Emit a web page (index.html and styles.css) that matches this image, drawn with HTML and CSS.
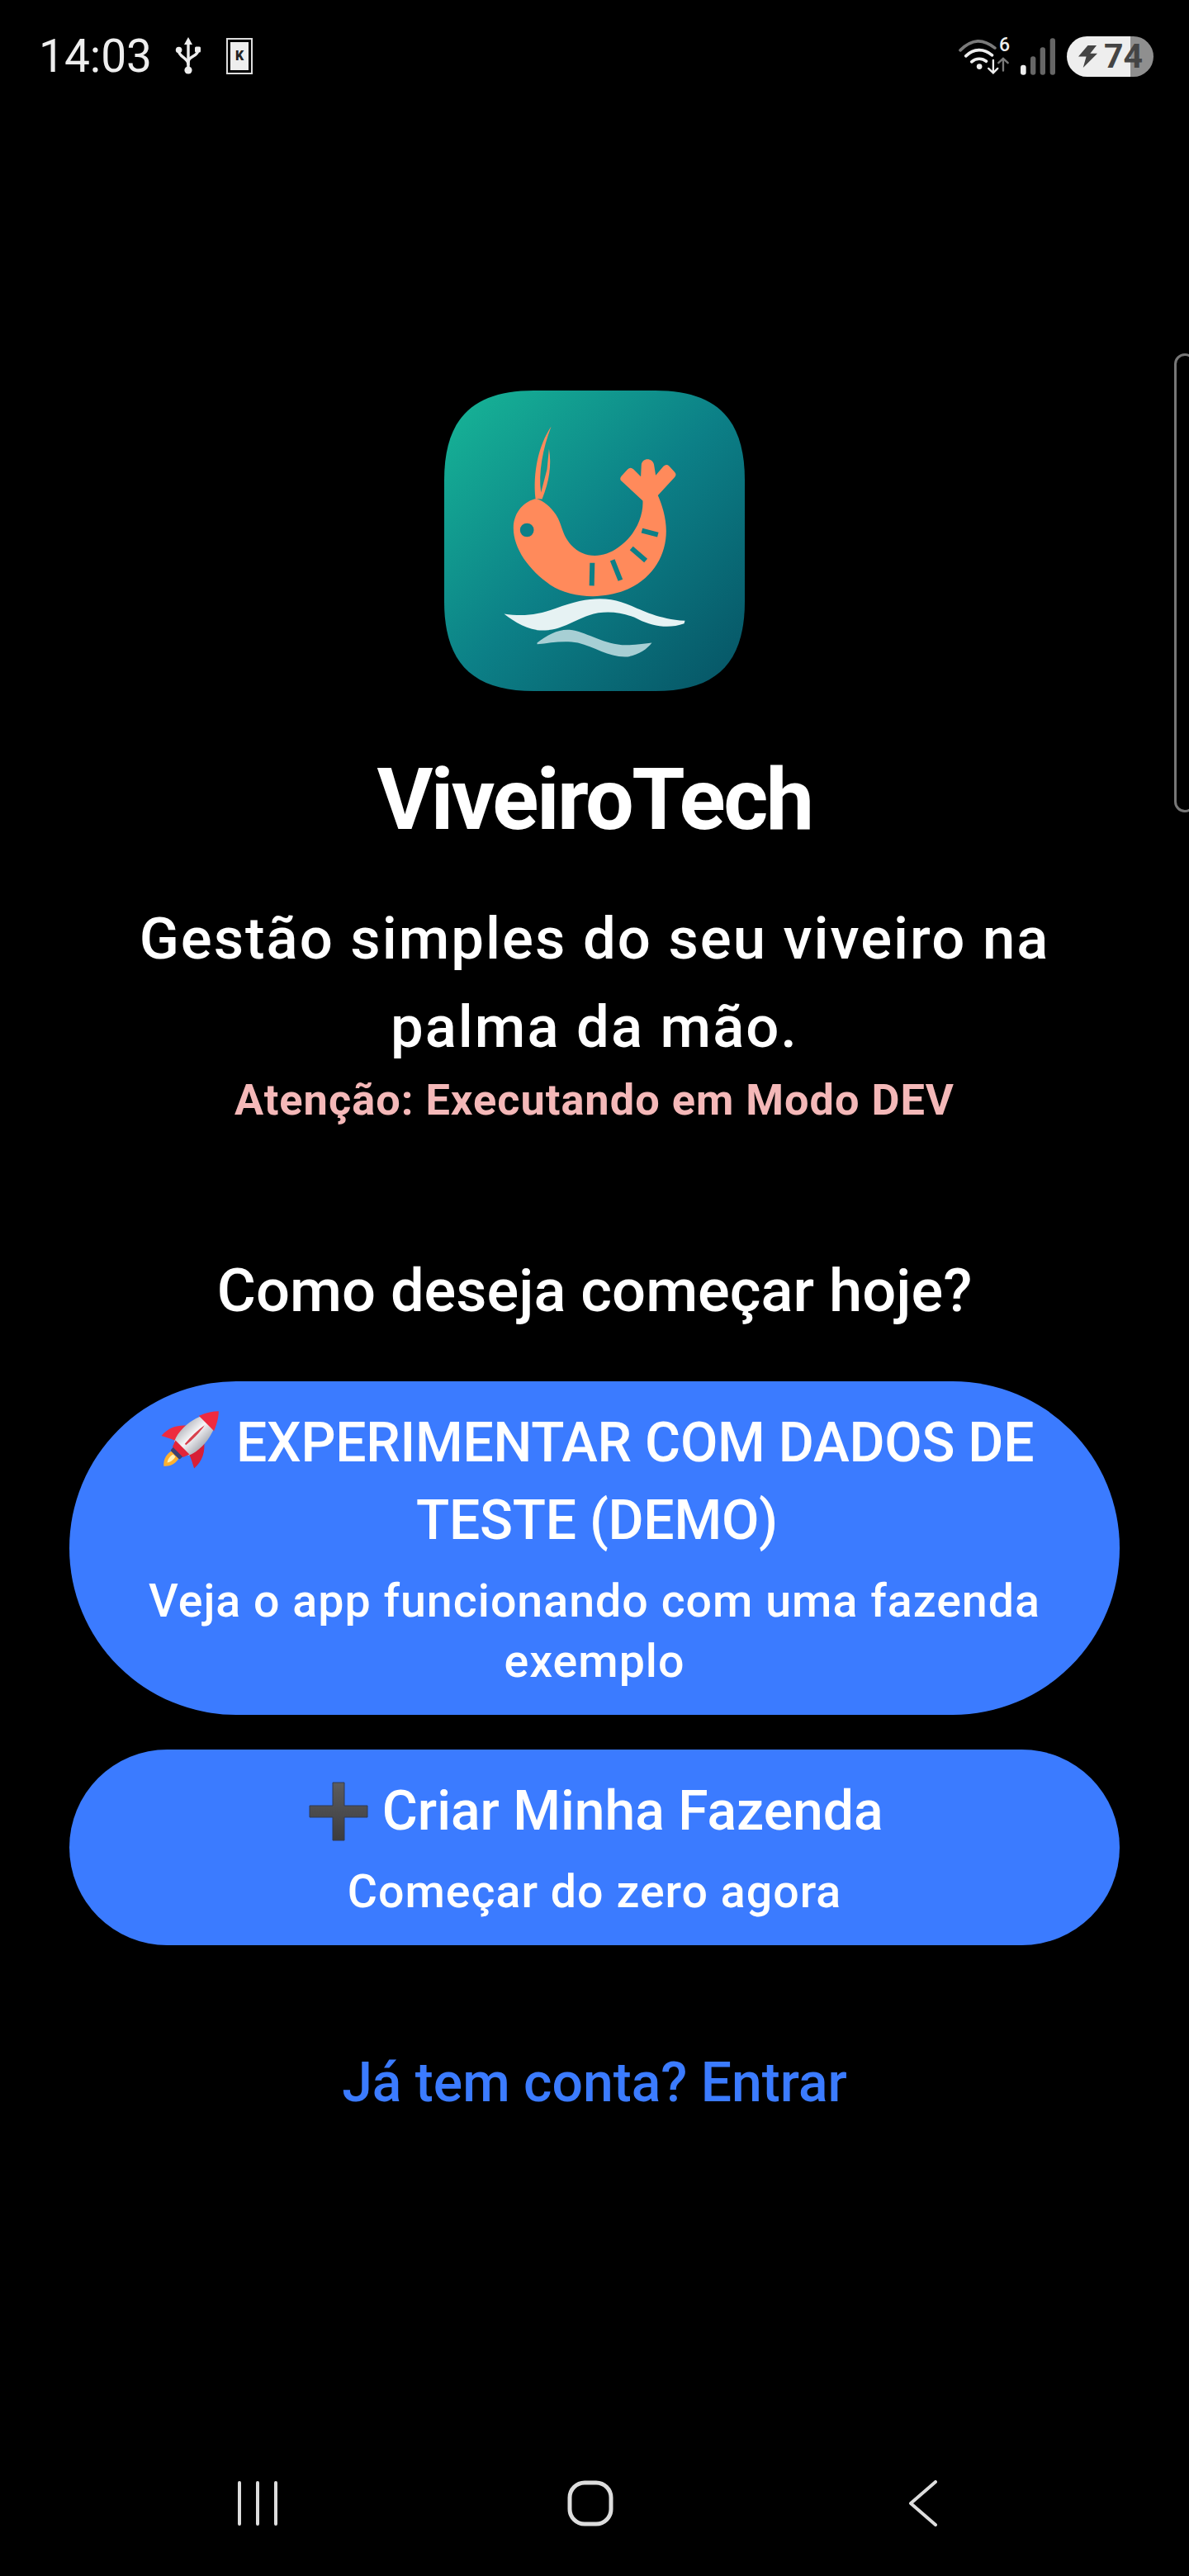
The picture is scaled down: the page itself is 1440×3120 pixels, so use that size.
FILE: index.html
```html
<!DOCTYPE html>
<html lang="pt-BR">
<head>
    <meta charset="UTF-8">
    <meta name="viewport" content="width=device-width, initial-scale=1.0">
    <title>ViveiroTech</title>
    <link rel="stylesheet" href="styles.css">
</head>
<body>
    <div class="phone">
        <div class="status-bar">
            <div class="status-left">
                <span class="clock">14:03</span>
                <svg class="icon-usb" viewBox="0 0 32 46" fill="none" stroke="#eee" stroke-width="3.4" stroke-linecap="round">
                    <path d="M16 8V40"/>
                    <path d="M16 0L21 9H11Z" fill="#eee" stroke="none"/>
                    <circle cx="16" cy="40" r="4.6" fill="#eee" stroke="none"/>
                    <circle cx="4.6" cy="15.5" r="3.8" fill="#eee" stroke="none"/>
                    <rect x="24" y="11.5" width="7" height="7" rx="1.5" fill="#eee" stroke="none"/>
                    <path d="M4.6 17C4.6 24 16 25 16 33"/>
                    <path d="M27.5 17C27.5 23 16 23 16 30"/>
                </svg>
                <span class="icon-k"><span class="icon-k-inner">K</span></span>
            </div>
            <div class="status-right">
                <div class="wifi">
                    <svg class="wifi-svg" viewBox="185 135 185 140" fill="none" stroke-linecap="round">
                        <path d="M191 182C235 140 272 140 316 174" stroke="#7a7a7a" stroke-width="11"/>
                        <path d="M211 203C240 175 276 175 306 200" stroke="#eee" stroke-width="11"/>
                        <path d="M232 224C248 210 270 210 285 222" stroke="#eee" stroke-width="11"/>
                        <circle cx="260" cy="241" r="10" fill="#eee"/>
                        <path d="M310 218V262M293 248L310 264L326 248" stroke="#eee" stroke-width="7"/>
                        <path d="M346 256V212M329 228L346 212L363 228" stroke="#7a7a7a" stroke-width="7"/>
                    </svg>
                    <span class="wifi-label">6</span>
                </div>
                <svg class="signal" viewBox="405 135 135 140">
                    <rect x="408" y="236" width="20" height="36" rx="9" fill="#eee"/>
                    <rect x="444" y="204" width="19" height="68" rx="9" fill="#666"/>
                    <rect x="479" y="171" width="19" height="101" rx="9" fill="#666"/>
                    <rect x="515" y="138" width="19" height="134" rx="9" fill="#666"/>
                </svg>
                <div class="battery">
                    <svg class="bolt" viewBox="0 0 24 28"><path d="M12 0H23L15 10H24L6 28L10 14H0Z" fill="#444"/></svg>
                    <span class="battery-level">74</span>
                </div>
            </div>
        </div>

        <div class="scroll-edge"></div>

        <main class="welcome">
            <svg class="logo" viewBox="115 70 1090 1090">
                <defs>
                    <linearGradient id="logoBg" x1="0" y1="0" x2="1" y2="1">
                        <stop offset="0" stop-color="#17b697"/>
                        <stop offset="0.5" stop-color="#0c8087"/>
                        <stop offset="1" stop-color="#065364"/>
                    </linearGradient>
                </defs>
                <path d="M440 70H880C1100 70 1205 170 1205 395V835C1205 1060 1100 1160 880 1160H440C220 1160 115 1060 115 835V395C115 170 220 70 440 70Z" fill="url(#logoBg)"/>
                <path d="M446 462C436 370 456 270 503 200C472 280 456 370 466 440L488 355L495 282C505 340 496 400 470 464Z" fill="#ff8a5b"/>
                <path d="M450 462C405 470 368 510 366 565C364 640 420 720 500 775C570 820 680 830 770 795C870 755 920 670 920 580C920 530 905 485 890 450L950 385Q960 375 950 365L930 343Q920 335 910 345L882 378L876 340C872 312 832 312 830 340L828 382L802 356Q790 345 780 356L758 380Q748 392 760 400L835 470C838 530 805 600 745 640C690 680 620 680 575 630C540 590 545 560 520 520C500 490 475 470 450 462Z" fill="#ff8a5b"/>
                <circle cx="415" cy="576" r="25" fill="#0c7f87"/>
                <g stroke="#0c7f87" stroke-width="18" fill="none">
                    <path d="M652 695L650 778"/>
                    <path d="M725 685L754 758"/>
                    <path d="M794 642L846 687"/>
                    <path d="M832 578L890 593"/>
                </g>
                <path d="M332 880C400 890 450 885 520 860C600 830 660 820 720 828C800 840 850 895 988 905L985 915C930 935 870 925 820 900C770 875 700 865 640 885C580 905 540 940 470 940C420 940 370 910 332 880Z" fill="#e6f2f3"/>
                <path d="M452 985C490 955 530 935 570 938C630 945 680 985 760 993C800 995 840 988 868 985C850 1010 810 1035 770 1036C710 1036 660 1000 600 985C550 975 500 985 452 990Z" fill="#a7cfd4"/>
            </svg>

            <h1 class="app-name">ViveiroTech</h1>
            <p class="tagline">Gestão simples do seu viveiro na palma da mão.</p>
            <p class="dev-warning">Atenção: Executando em Modo DEV</p>
            <h2 class="question">Como deseja começar hoje?</h2>

            <button class="action-btn">
                <span class="btn-title btn-title-caps">
                    <svg class="emoji rocket" viewBox="-4 -2 76 76">
                        <defs>
                            <linearGradient id="rocketBody" x1="0" y1="0" x2="1" y2="0">
                                <stop offset="0" stop-color="#bfc0c6"/>
                                <stop offset="0.45" stop-color="#f6f6f8"/>
                                <stop offset="1" stop-color="#aeb0b8"/>
                            </linearGradient>
                        </defs>
                        <g transform="rotate(45 35 35)">
                            <path d="M35 84C28 78 27 70 29 64H41C43 70 42 78 35 84Z" fill="#ffb02e"/>
                            <path d="M35 78C32 74 32 70 33 66H37C38 70 38 74 35 78Z" fill="#fff4b8"/>
                            <rect x="27" y="57" width="16" height="8" rx="2" fill="#3b4272"/>
                            <path d="M22 28C12 36 6 46 7 60C13 57 18 54 24 52Z" fill="#ee2b3f"/>
                            <path d="M48 28C58 36 64 46 63 60C57 57 52 54 46 52Z" fill="#d81f36"/>
                            <path d="M35 -8C24 4 19 20 19 34C19 42 20 48 23 54H47C50 48 51 42 51 34C51 20 46 4 35 -8Z" fill="url(#rocketBody)"/>
                            <path d="M35 -10C29 -4 25 4 22 11H48C45 4 41 -4 35 -10Z" fill="#ee2b3f"/>
                            <path d="M23 52H47L44 60H26Z" fill="#e32539"/>
                            <path d="M35 14C37 24 37 36 36 47H34C33 36 33 24 35 14Z" fill="#d8404c"/>
                        </g>
                    </svg>
                    EXPERIMENTAR COM DADOS DE TESTE (DEMO)
                </span>
                <span class="btn-sub">Veja o app funcionando com uma fazenda exemplo</span>
            </button>

            <button class="action-btn">
                <span class="btn-title">
                    <svg class="emoji plus" viewBox="0 0 72 72">
                        <defs>
                            <linearGradient id="plusFill" x1="0" y1="0" x2="0" y2="1">
                                <stop offset="0" stop-color="#5c5c5e"/>
                                <stop offset="1" stop-color="#3c3c3e"/>
                            </linearGradient>
                        </defs>
                        <path d="M29 1H43V29H71V43H43V71H29V43H1V29H29Z" fill="url(#plusFill)" stroke="#2e3a55" stroke-width="1" stroke-linejoin="round"/>
                    </svg>
                    Criar Minha Fazenda
                </span>
                <span class="btn-sub">Começar do zero agora</span>
            </button>

            <a class="login-link" href="#">Já tem conta? Entrar</a>
        </main>

        <nav class="nav-bar">
            <svg class="nav-recents" viewBox="0 0 50 54" stroke="#ddd" stroke-width="4" stroke-linecap="round">
                <path d="M3 2V52M25 2V52M47 2V52"/>
            </svg>
            <svg class="nav-home" viewBox="0 0 56 56" fill="none" stroke="#ddd" stroke-width="5">
                <rect x="3" y="3" width="50" height="50" rx="18"/>
            </svg>
            <svg class="nav-back" viewBox="0 0 36 56" fill="none" stroke="#ddd" stroke-width="4" stroke-linecap="round" stroke-linejoin="round">
                <path d="M33 2L3 28L33 54"/>
            </svg>
        </nav>
    </div>
</body>
</html>
```

FILE: styles.css
```css
* {
    box-sizing: border-box;
}

body {
    margin: 0;
    background-color: #000;
    color: #fff;
    font-family: Roboto, 'Liberation Sans', sans-serif;
}

.phone {
    position: relative;
    width: 1440px;
    height: 3120px;
    display: flex;
    flex-direction: column;
    overflow: hidden;
}

/* status bar */
.status-bar {
    height: 136px;
    padding: 44px 43px 0 47px;
    display: flex;
    justify-content: space-between;
    align-items: flex-start;
}

.status-left {
    display: flex;
    align-items: center;
    height: 48px;
}

.clock {
    font-size: 55px;
    line-height: 48px;
    color: #eee;
    width: 165px;
}

.icon-usb {
    width: 32px;
    height: 46px;
}

.icon-k {
    margin-left: 30px;
    width: 32px;
    height: 44px;
    padding: 3px;
    border: 2px solid #ddd;
    display: flex;
}

.icon-k-inner {
    flex: 1;
    background: #eee;
    color: #222;
    font-size: 16px;
    font-weight: 900;
    line-height: 34px;
    text-align: center;
}

.status-right {
    display: flex;
    align-items: center;
    height: 49px;
}

.wifi {
    position: relative;
    width: 62px;
    height: 47px;
}

.wifi-svg {
    width: 62px;
    height: 47px;
    display: block;
}

.wifi-label {
    position: absolute;
    right: 0;
    top: -3px;
    font-size: 23px;
    line-height: 26px;
    font-weight: 500;
    color: #eee;
}

.signal {
    width: 45px;
    height: 47px;
    margin-left: 12px;
}

.battery {
    width: 105px;
    height: 49px;
    margin-left: 12px;
    border-radius: 25px;
    background: linear-gradient(90deg, #eee 73.5%, #8f8f8f 73.5%);
    display: flex;
    align-items: center;
    padding-left: 14px;
}

.bolt {
    width: 23px;
    height: 27px;
}

.battery-level {
    margin-left: 8px;
    font-size: 41px;
    line-height: 49px;
    font-weight: 700;
    color: #444;
}

.scroll-edge {
    position: absolute;
    right: -8px;
    top: 428px;
    width: 26px;
    height: 556px;
    border: 3px solid #777;
    border-radius: 16px;
}

/* main content */
.welcome {
    flex: 1;
    padding: 337px 84px 0;
    display: flex;
    flex-direction: column;
    align-items: center;
    text-align: center;
}

.logo {
    width: 364px;
    height: 364px;
    display: block;
}

.app-name {
    margin: 66px 0 0;
    font-size: 104px;
    line-height: 132px;
    font-weight: 700;
    letter-spacing: -2.5px;
}

.tagline {
    margin: 48px 0 0;
    width: 1240px;
    font-size: 70.7px;
    line-height: 107px;
    font-weight: 500;
    letter-spacing: 2px;
}

.dev-warning {
    margin: 0;
    font-size: 52.3px;
    line-height: 70px;
    font-weight: 700;
    letter-spacing: 1px;
    color: #f4b8b8;
}

.question {
    margin: 152px 0 0;
    font-size: 72.3px;
    line-height: 90px;
    font-weight: 500;
}

.action-btn {
    width: 1272px;
    margin-top: 42px;
    padding: 28px 84px 28px;
    border: none;
    border-radius: 999px;
    background-color: #3b7bff;
    color: #fff;
    font-family: inherit;
    display: flex;
    flex-direction: column;
    align-items: center;
    text-align: center;
}

.question + .action-btn {
    margin-top: 64px;
}

.btn-title {
    font-size: 66px;
    line-height: 94px;
    font-weight: 500;
}

.btn-title-caps {
    padding-left: 6px;
    letter-spacing: -0.25px;
}

.btn-sub {
    margin-top: 14px;
    font-size: 55.5px;
    line-height: 73px;
    font-weight: 500;
    letter-spacing: 1px;
}

.emoji {
    display: inline-block;
    vertical-align: -10px;
}

.rocket {
    width: 76px;
    height: 76px;
    overflow: visible;
}

.plus {
    width: 72px;
    height: 72px;
    margin-left: 4px;
    vertical-align: -14px;
}

.login-link {
    margin-top: 122px;
    font-size: 66px;
    line-height: 90px;
    font-weight: 500;
    color: #3b7bff;
    text-decoration: none;
}

/* android nav */
.nav-bar {
    position: absolute;
    left: 0;
    right: 0;
    top: 3004px;
    height: 56px;
}

.nav-bar svg {
    position: absolute;
    top: 0;
    height: 56px;
}

.nav-recents {
    left: 287px;
    width: 50px;
}

.nav-home {
    left: 687px;
    width: 56px;
}

.nav-back {
    left: 1100px;
    width: 36px;
}
```
